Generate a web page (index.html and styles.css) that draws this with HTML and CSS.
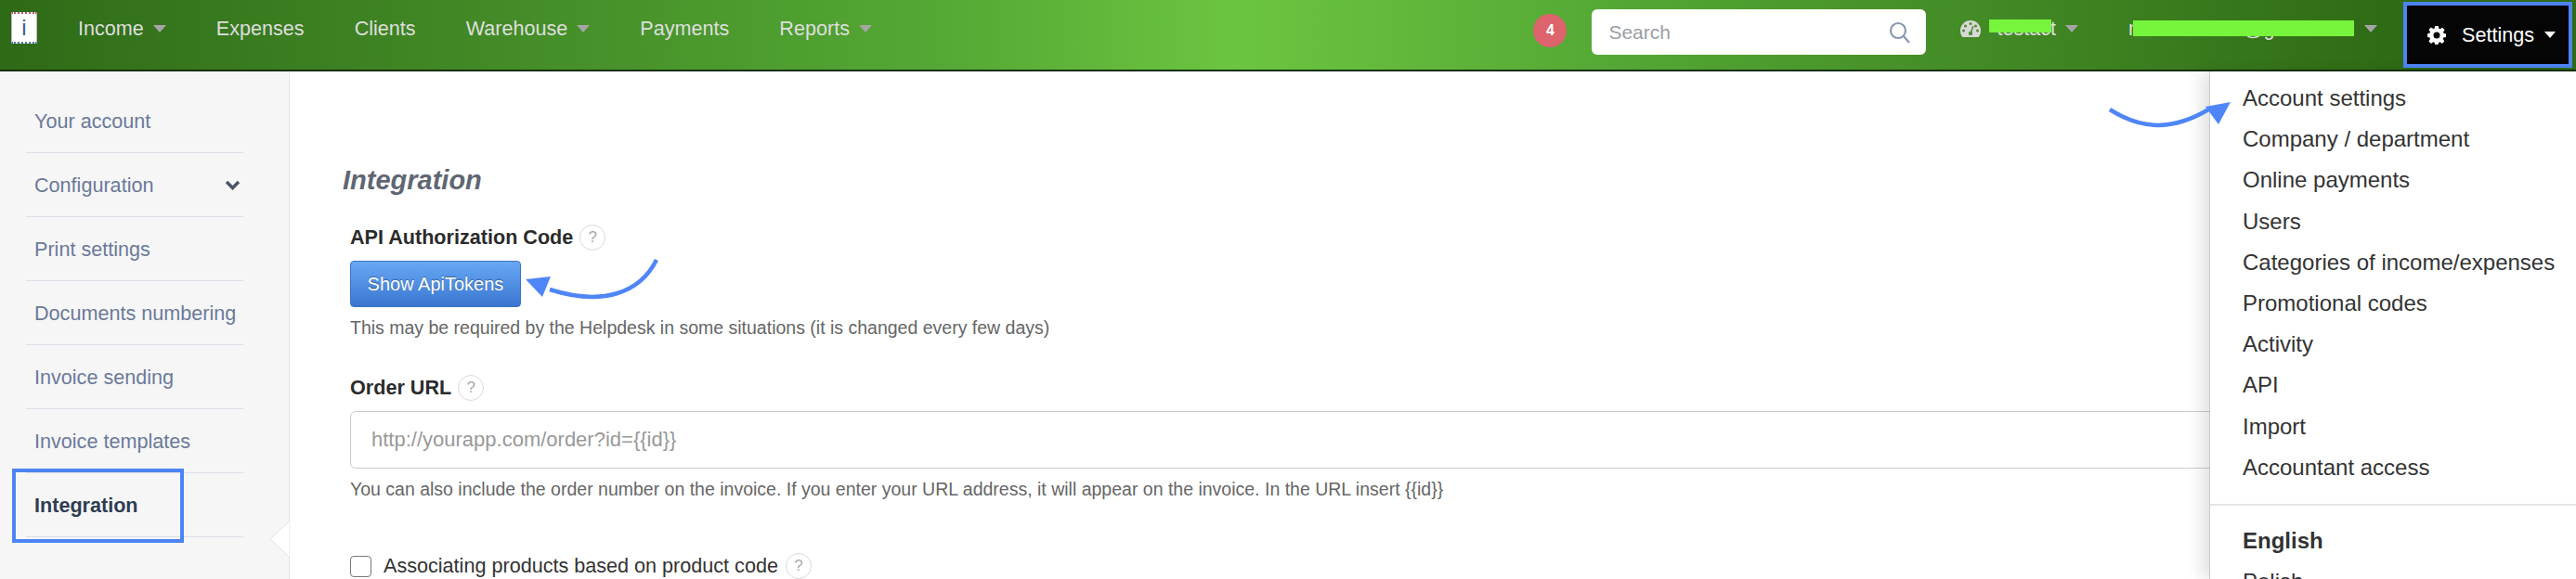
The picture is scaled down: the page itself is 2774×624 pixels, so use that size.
FILE: index.html
```html
<!DOCTYPE html>
<html lang="en">
<head>
<meta charset="utf-8">
<title>Integration</title>
<link rel="stylesheet" href="styles.css">
</head>
<body>
<header class="topbar">
  <a class="logo"><span class="logo-i">i</span></a>
  <nav class="nav">
    <a class="nav-link">Income <i class="caret"></i></a>
    <a class="nav-link">Expenses</a>
    <a class="nav-link">Clients</a>
    <a class="nav-link">Warehouse <i class="caret"></i></a>
    <a class="nav-link">Payments</a>
    <a class="nav-link">Reports <i class="caret"></i></a>
  </nav>
  <div class="top-right">
    <span class="badge">4</span>
    <div class="search">
      <span class="search-text">Search</span>
      <svg class="search-icon" width="24" height="24" viewBox="0 0 24 24"><circle cx="10" cy="10" r="8" fill="none" stroke="#8a96b0" stroke-width="2.2"/><path d="M16 16l6 7" stroke="#8a96b0" stroke-width="2.2" fill="none"/></svg>
    </div>
    <a class="nav-link account">
      <svg class="gauge" width="24" height="20" viewBox="0 0 24 20"><path d="M12 1a11 11 0 0 0-11 11c0 3 1 5.500 2.500 7h17c1.500-1.500 2.500-4 2.500-7a11 11 0 0 0-11-11z" fill="#d8d8d8"/><g fill="#4d8f30"><circle cx="12" cy="4.500" r="1.500"/><circle cx="6.500" cy="7" r="1.500"/><circle cx="17.500" cy="7" r="1.500"/><circle cx="4.500" cy="12" r="1.500"/><circle cx="19.500" cy="12" r="1.500"/><circle cx="12" cy="15" r="2.200"/></g><path d="M12 15l3-8" stroke="#4d8f30" stroke-width="1.500"/></svg>
      <span class="masked">testact<span class="mask mask-a"></span></span> <i class="caret"></i>
    </a>
    <a class="nav-link account email">
      <span class="masked">mariusz2000@gmail.com<span class="mask mask-b"></span></span> <i class="caret"></i>
    </a>
    <a class="settings">
      <svg class="gear" width="20" height="20" viewBox="0 0 20 20"><path fill="#fff" fill-rule="evenodd" d="M8.200 0h3.600l.5 2.700 1.500.6 2.300-1.600 2.500 2.500-1.600 2.300.6 1.500 2.400.5v3.600l-2.700.5-.6 1.500 1.600 2.300-2.500 2.500-2.300-1.600-1.500.6-.5 2.700H8.200l-.5-2.700-1.500-.6-2.300 1.600-2.500-2.500 1.600-2.300-.6-1.500L0 11.800V8.200l2.400-.5.6-1.500-1.600-2.300 2.500-2.500 2.300 1.600 1.500-.6zM10 6.500a3.500 3.500 0 1 0 0 7 3.500 3.500 0 0 0 0-7z"/></svg>
      <span>Settings</span>
      <i class="caret caret-white"></i>
    </a>
  </div>
</header>

<div class="page">
  <aside class="sidebar">
    <a class="side-item">Your account</a>
    <a class="side-item side-toggle">Configuration
      <svg class="chevron" width="17" height="11" viewBox="0 0 17 11"><path d="M2 2l6.500 6.500L15 2" fill="none" stroke="#4c5568" stroke-width="3.400"/></svg>
    </a>
    <a class="side-item">Print settings</a>
    <a class="side-item">Documents numbering</a>
    <a class="side-item">Invoice sending</a>
    <a class="side-item">Invoice templates</a>
    <a class="side-item side-active">Integration</a>
    <svg class="notch" width="22" height="42" viewBox="0 0 22 42"><path d="M22 1L1 21l21 20z" fill="#fff" stroke="#d6e2ea"/></svg>
  </aside>

  <main class="main">
    <h1 class="title">Integration</h1>
    <section class="form">
      <div class="label">API Authorization Code <span class="help">?</span></div>
      <button class="btn">Show ApiTokens</button>
      <p class="hint">This may be required by the Helpdesk in some situations (it is changed every few days)</p>

      <div class="label label-order">Order URL <span class="help">?</span></div>
      <input class="input" type="text" placeholder="http://yourapp.com/order?id={{id}}">
      <p class="hint">You can also include the order number on the invoice. If you enter your URL address, it will appear on the invoice. In the URL insert {{id}}</p>

      <label class="check"><span class="box"></span>Associating products based on product code <span class="help">?</span></label>
    </section>
  </main>
</div>

<div class="dropdown">
  <a class="menu-item">Account settings</a>
  <a class="menu-item">Company / department</a>
  <a class="menu-item">Online payments</a>
  <a class="menu-item">Users</a>
  <a class="menu-item">Categories of income/expenses</a>
  <a class="menu-item">Promotional codes</a>
  <a class="menu-item">Activity</a>
  <a class="menu-item">API</a>
  <a class="menu-item">Import</a>
  <a class="menu-item">Accountant access</a>
  <div class="menu-divider"></div>
  <a class="menu-item menu-bold">English</a>
  <a class="menu-item">Polish</a>
</div>

<svg class="arrow arrow-btn" width="150" height="60" viewBox="0 0 150 60">
  <path d="M143 2C125 38 85 52 28 34" fill="none" stroke="#4f86f7" stroke-width="4.500"/>
  <path d="M2 23l27-3-9 22z" fill="#4f86f7"/>
</svg>
<svg class="arrow arrow-menu" width="140" height="40" viewBox="0 0 140 40">
  <path d="M2 9c28 18 62 27 108-1" fill="none" stroke="#4f86f7" stroke-width="4.500"/>
  <path d="M132 1l-27 5 14 19z" fill="#4f86f7"/>
</svg>
</body>
</html>
```
FILE: styles.css
```css
* { box-sizing: border-box; }
html, body { margin: 0; height: 624px; overflow: hidden; }
body { position: relative; font-family: "Liberation Sans", Arial, sans-serif; font-size: 21.6px; background: #fff; color: #333; }

.topbar {
  display: flex; align-items: flex-start; height: 77px;
  background: linear-gradient(90deg, #2f6a17 0%, #55a935 37%, #6cc540 48%, #55a935 62%, #2f6a15 93%);
  border-bottom: 2px solid #17300c;
}
.logo { display: flex; align-items: center; justify-content: center; width: 28px; height: 34px; margin: 13px 0 0 12px; background: #fff; border: 1px solid #bbb; border-top: 2px dotted #b5577a; border-bottom: 2px dotted #5577b5; }
.logo-i { font-size: 24px; line-height: 1; color: #3a5f95; }
.nav { display: flex; gap: 54px; margin: 17px 0 0 44px; }
.nav-link { display: flex; align-items: center; gap: 10px; height: 28px; color: #dedede; white-space: nowrap; }
.caret { display: inline-block; width: 14px; height: 0; border-left: 7px solid transparent; border-right: 7px solid transparent; border-top: 8px solid #a5a5a5; }
.caret-white { width: 12px; border-left-width: 6px; border-right-width: 6px; border-top: 7px solid #fff; }

.top-right { display: flex; align-items: flex-start; margin-left: auto; }
.badge { display: flex; align-items: center; justify-content: center; width: 36px; height: 36px; margin-top: 15px; border-radius: 50%; background: #dd636c; color: #fff; font-size: 16px; font-weight: bold; }
.search { display: flex; align-items: center; justify-content: space-between; width: 360px; height: 49px; margin: 10px 0 0 27px; padding: 0 16px 0 18px; background: #fff; border-radius: 6px; }
.search-text { color: #9a9ea6; font-size: 21px; }
.account { margin: 17px 0 0 36px; position: relative; }
.gauge { margin-right: 6px; }
.masked { position: relative; }
.mask { position: absolute; background: #76f53c; }
.mask-a { left: -8px; top: 3px; width: 67px; height: 14px; }
.mask-b { left: 5px; top: 4px; width: 238px; height: 17px; }
.email { margin-left: 54px; }
.settings { display: flex; align-items: center; width: 182px; height: 71px; margin: 2px 4px 0 28px; padding: 0 0 0 22px; background: #050505; border: 4px solid #4d84f5; color: #fff; gap: 0; }
.settings span { margin: 0 11px 0 17px; }

.page { display: flex; height: 547px; }
.sidebar { position: relative; flex: none; width: 312px; padding: 19px 49px 0 28px; background: #f6f6f7; border-right: 1px solid #e4e6ea; }
.side-item { display: flex; align-items: center; justify-content: space-between; padding: 14.500px 3px 14.500px 9px; line-height: 39px; border-bottom: 1px solid #dcdfe8; color: #6b7a99; }
.side-active { position: relative; color: #2f3c52; font-weight: bold; }
.side-active::before { content: ""; position: absolute; left: -15px; top: -5px; width: 177px; height: 72px; border: 4px solid #4d84f5; }
.notch { position: absolute; right: -1px; top: 483px; }

.main { flex: 1; padding: 100px 0 0 57px; min-width: 0; }
.title { margin: 0; font-size: 29px; line-height: 34px; font-style: italic; font-weight: bold; color: #5f6672; }
.form { margin: 30px 0 0 8px; }
.label { display: flex; align-items: center; gap: 7px; font-weight: bold; line-height: 30px; color: #2b2b2b; }
.label-order { margin-top: 35px; }
.help { display: inline-flex; align-items: center; justify-content: center; width: 28px; height: 28px; border: 1px solid #d9d9d9; border-radius: 50%; font-size: 17px; font-weight: normal; color: #a8a8a8; }
.btn { display: block; width: 184px; height: 50px; margin: 10px 0 0; padding: 0; border: 1px solid #3a74c4; border-radius: 4px; background: linear-gradient(#68a8f5, #3a76d0); color: #fff; font: 20px "Liberation Sans", Arial, sans-serif; text-shadow: 0 -1px 1px rgba(0,0,0,.35); }
.hint { margin: 7px 0 0; font-size: 19.500px; line-height: 30px; color: #666; }
.input { display: block; width: 2200px; height: 62px; margin-top: 10px; padding: 0 22px; border: 1px solid #cbcbcb; border-radius: 6px; font: 22px "Liberation Sans", Arial, sans-serif; color: #333; background: #fff; }
.input::placeholder { color: #999; opacity: 1; }
.check { display: flex; align-items: center; margin-top: 53px; line-height: 30px; color: #333; }
.box { width: 23px; height: 23px; margin-right: 13px; border: 1.500px solid #777; border-radius: 4px; background: #fff; }
.check .help { margin-left: 8px; }

.dropdown { position: absolute; left: 2379px; top: 77px; right: 0; padding-top: 7px; height: 547px; overflow: hidden; background: #fff; border-left: 1px solid #c9c9c9; box-shadow: -10px 0 14px rgba(0,0,0,.1); }
.menu-item { display: block; height: 44.200px; padding-left: 35px; line-height: 44px; font-size: 24px; color: #333; white-space: nowrap; }
.menu-divider { height: 2px; margin: 17px 0 16px; background: #e5e5e5; }
.menu-bold { font-weight: bold; }

.arrow { position: absolute; }
.arrow-btn { left: 564px; top: 278px; }
.arrow-menu { left: 2270px; top: 109px; }
```
